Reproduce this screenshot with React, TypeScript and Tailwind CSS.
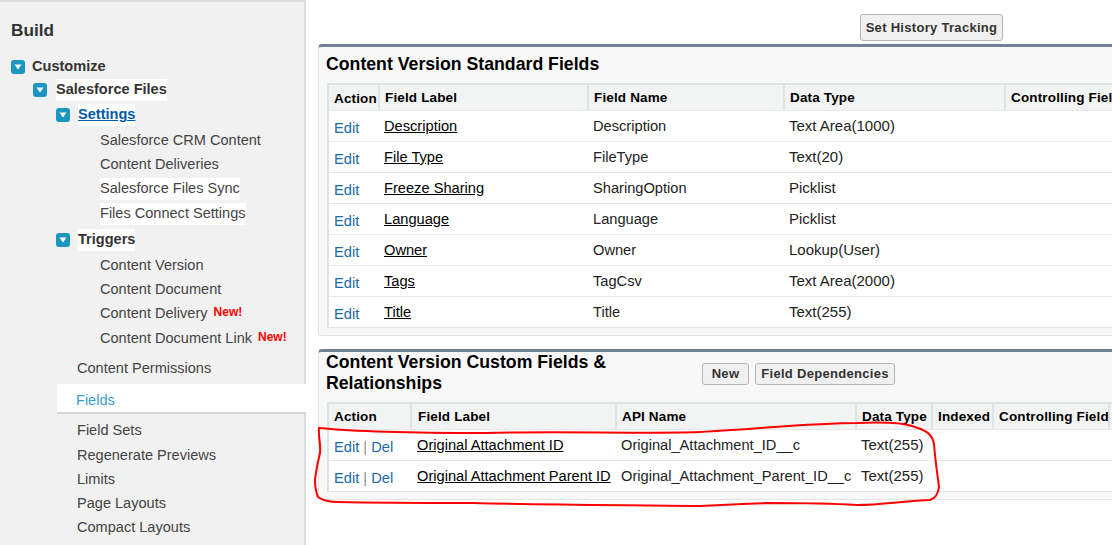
const FONT = "font-['Liberation_Sans',Arial,sans-serif]";

function Toggle() {
  return (
    <span className="flex h-[14px] w-[14px] shrink-0 items-center justify-center rounded-[3px] bg-[#1a96c0]">
      <svg width="8" height="6" viewBox="0 0 8 6">
        <path d="M0.5 0.5h7L4 5.5z" fill="#fff" />
      </svg>
    </span>
  );
}

function TreeRow({
  label,
  indent,
  className,
  highlight,
  link,
}: {
  label: string;
  indent: string;
  className: string;
  highlight?: boolean;
  link?: boolean;
}) {
  return (
    <div className={`flex items-center font-bold text-[#333] ${indent} ${className}`}>
      <Toggle />
      <span className={`${highlight ? 'bg-white' : ''} ${link ? 'text-[#015ba7] underline' : ''}`}>{label}</span>
    </div>
  );
}

function LeafRow({
  label,
  className,
  highlight,
  isNew,
}: {
  label: string;
  className: string;
  highlight?: boolean;
  isNew?: boolean;
}) {
  return (
    <div className={`flex h-[20px] items-center pl-[100px] text-[#444] ${className}`}>
      <span className={highlight ? 'bg-white' : ''}>{label}</span>
      {isNew && <span className="-mt-[5px] ml-[6px] text-[12px] font-bold text-[#f00]">New!</span>}
    </div>
  );
}

function Sidebar() {
  return (
    <aside className="h-[545px] w-[306px] shrink-0 border-t-2 border-r-2 border-[#dcdcdc] bg-[#f1f1f1] text-[14.55px]">
      <div className="pt-[19px] pl-[11px] text-[17.2px] leading-[19px] font-bold text-[#333]">Build</div>
      <div className="mt-[17px]">
        <TreeRow label="Customize" indent="gap-[7px] pl-[11px]" className="h-[20px]" />
        <TreeRow label="Salesforce Files" indent="gap-[9px] pl-[33px]" className="mt-[3px] h-[20px]" highlight />
        <TreeRow label="Settings" indent="gap-[8px] pl-[56px]" className="mt-[5px] h-[20px]" highlight link />
        <LeafRow label="Salesforce CRM Content" className="mt-[6px]" />
        <LeafRow label="Content Deliveries" className="mt-[4px]" />
        <LeafRow label="Salesforce Files Sync" className="mt-[4px]" highlight />
        <LeafRow label="Files Connect Settings" className="mt-[5px]" highlight />
        <TreeRow label="Triggers" indent="gap-[8px] pl-[56px]" className="mt-[6px] h-[20px]" highlight />
        <LeafRow label="Content Version" className="mt-[6px]" />
        <LeafRow label="Content Document" className="mt-[4px]" />
        <LeafRow label="Content Delivery" className="mt-[4px]" isNew />
        <LeafRow label="Content Document Link" className="mt-[5px]" isNew />
      </div>
      <div className="mt-[10px]">
        <div className="flex h-[20px] items-center pl-[77px] text-[#444]">Content Permissions</div>
        <div className="mt-[5px] ml-[57px] flex h-[30px] w-[249px] items-center border-b-2 border-[#d4d4d4] bg-white pt-[6px] pl-[19px] text-[#3a9fd0]">
          Fields
        </div>
        <div className="mt-[7px] flex h-[20px] items-center pl-[77px] text-[#444]">Field Sets</div>
        <div className="mt-[5px] flex h-[20px] items-center pl-[77px] text-[#444]">Regenerate Previews</div>
        <div className="mt-[4px] flex h-[20px] items-center pl-[77px] text-[#444]">Limits</div>
        <div className="mt-[4px] flex h-[20px] items-center pl-[77px] text-[#444]">Page Layouts</div>
        <div className="mt-[4px] flex h-[20px] items-center pl-[77px] text-[#444]">Compact Layouts</div>
      </div>
    </aside>
  );
}

function Btn({ label, className }: { label: string; className: string }) {
  return (
    <button
      type="button"
      className={`flex items-center justify-center rounded-[3px] border border-[#b5b5b5] bg-[#f0f0f0] text-[13px] font-bold tracking-[0.3px] whitespace-nowrap text-[#333] ${className}`}
    >
      {label}
    </button>
  );
}

function Th({ label, className }: { label: string; className: string }) {
  return (
    <div className={`flex h-[25px] shrink-0 items-center border-r-2 border-[#e0e3e5] text-[13.5px] font-bold tracking-[0.15px] whitespace-nowrap text-black ${className}`}>
      {label}
    </div>
  );
}

const standardRows = [
  ['Description', 'Description', 'Text Area(1000)'],
  ['File Type', 'FileType', 'Text(20)'],
  ['Freeze Sharing', 'SharingOption', 'Picklist'],
  ['Language', 'Language', 'Picklist'],
  ['Owner', 'Owner', 'Lookup(User)'],
  ['Tags', 'TagCsv', 'Text Area(2000)'],
  ['Title', 'Title', 'Text(255)'],
];

const customRows = [
  ['Original Attachment ID', 'Original_Attachment_ID__c', 'Text(255)'],
  ['Original Attachment Parent ID', 'Original_Attachment_Parent_ID__c', 'Text(255)'],
];

function StandardPanel() {
  return (
    <section className="w-[820px] rounded-tl-[4px] rounded-bl-[4px] border-t-[3px] border-b border-l border-[#747e96] border-b-[#e3e3e3] border-l-[#e3e3e3] bg-[#f8f8f8] pb-[7px] pl-[8px]">
      <h2 className="-ml-[1px] h-[36px] pt-[5px] text-[17.7px] leading-[24px] font-bold text-black">Content Version Standard Fields</h2>
      <div className="border-t-2 border-b border-l-2 border-[#e0e3e5] bg-white">
        <div className="flex h-[25px] bg-[#f2f3f3]">
          <Th label="Action" className="w-[51px] pt-[3px] pl-[5px]" />
          <Th label="Field Label" className="w-[209px] pt-[2px] pl-[5px]" />
          <Th label="Field Name" className="w-[196px] pt-[2px] pl-[5px]" />
          <Th label="Data Type" className="w-[221px] pt-[2px] pl-[5px]" />
          <Th label="Controlling Field" className="w-[200px] pt-[2px] pl-[5px]" />
        </div>
        {standardRows.map(([label, name, type]) => (
          <div key={label} className="flex h-[31px] items-center border-t border-[#e8e8e8] pt-[1px] text-[14.65px] text-[#222]">
            <a className="w-[51px] pt-[4px] pl-[5px] text-[#1a6aa8]">Edit</a>
            <a className="w-[209px] pl-[4px] text-black underline">{label}</a>
            <span className="w-[196px] pl-[4px]">{name}</span>
            <span className="pl-[4px] text-[15px]">{type}</span>
          </div>
        ))}
      </div>
    </section>
  );
}

function CustomPanel() {
  return (
    <section className="mt-[13px] w-[820px] rounded-tl-[4px] rounded-bl-[4px] border-t-[3px] border-b border-l border-[#747e96] border-b-[#e3e3e3] border-l-[#e3e3e3] bg-[#f8f8f8] pb-[7px] pl-[8px]">
      <div className="flex h-[50px] items-start">
        <h2 className="-ml-[1px] w-[376px] text-[17.7px] leading-[21px] font-bold text-black">
          Content Version Custom Fields &amp; Relationships
        </h2>
        <div className="mt-[11px] flex gap-[6px]">
          <Btn label="New" className="h-[22px] w-[47px]" />
          <Btn label="Field Dependencies" className="h-[22px] w-[140px]" />
        </div>
      </div>
      <div className="border-t-2 border-b border-l-2 border-[#e0e3e5] bg-white">
        <div className="flex h-[25px] bg-[#f2f3f3]">
          <Th label="Action" className="w-[83px] pt-[1px] pl-[5px]" />
          <Th label="Field Label" className="w-[205px] pt-[1px] pl-[6px]" />
          <Th label="API Name" className="w-[240px] pt-[1px] pl-[5px]" />
          <Th label="Data Type" className="w-[76px] pt-[1px] pl-[5px]" />
          <Th label="Indexed" className="w-[61px] pt-[1px] pl-[5px]" />
          <Th label="Controlling Field" className="w-[116px] pt-[1px] pl-[5px]" />
        </div>
        {customRows.map(([label, name, type]) => (
          <div key={label} className="flex h-[31px] items-center border-t border-[#e8e8e8] pt-[1px] text-[14.65px] text-[#222]">
            <span className="w-[83px] pt-[4px] pl-[5px] text-[#1a6aa8]">
              Edit <span className="text-[#8a8a8a]">|</span> Del
            </span>
            <a className="w-[205px] pl-[5px] text-black underline">{label}</a>
            <span className="w-[240px] pl-[4px]">{name}</span>
            <span className="pl-[4px] text-[15px]">{type}</span>
          </div>
        ))}
      </div>
    </section>
  );
}

export default function App() {
  return (
    <div className={`relative flex h-[545px] w-[1112px] overflow-hidden bg-white ${FONT}`}>
      <Sidebar />
      <main className="min-w-0 flex-1 pl-[12px]">
        <div className="flex h-[44px] items-start pt-[14px] pl-[542px]">
          <Btn label="Set History Tracking" className="h-[27px] w-[143px]" />
        </div>
        <StandardPanel />
        <CustomPanel />
      </main>
      <svg className="pointer-events-none absolute top-0 left-0" width="1112" height="545" fill="none">
        <path
          d="M319 428C350 431 420 433 485 433C560 431 640 434 700 432C760 429 810 423 857 423C880 422 900 422 912 426C925 430 932 433 934 444C935 458 937 472 939 487C938 494 936 498 930 500C905 501 880 505 857 505C825 503 795 503 767 503C745 504 725 505 700 506C620 505 550 505 472 503C420 503 380 503 338 502C328 502 322 500 318 497C315 490 315 486 315 480C316 470 318 462 320 453C321 444 318 436 319 428Z"
          stroke="#f00"
          strokeWidth="2"
        />
      </svg>
    </div>
  );
}
